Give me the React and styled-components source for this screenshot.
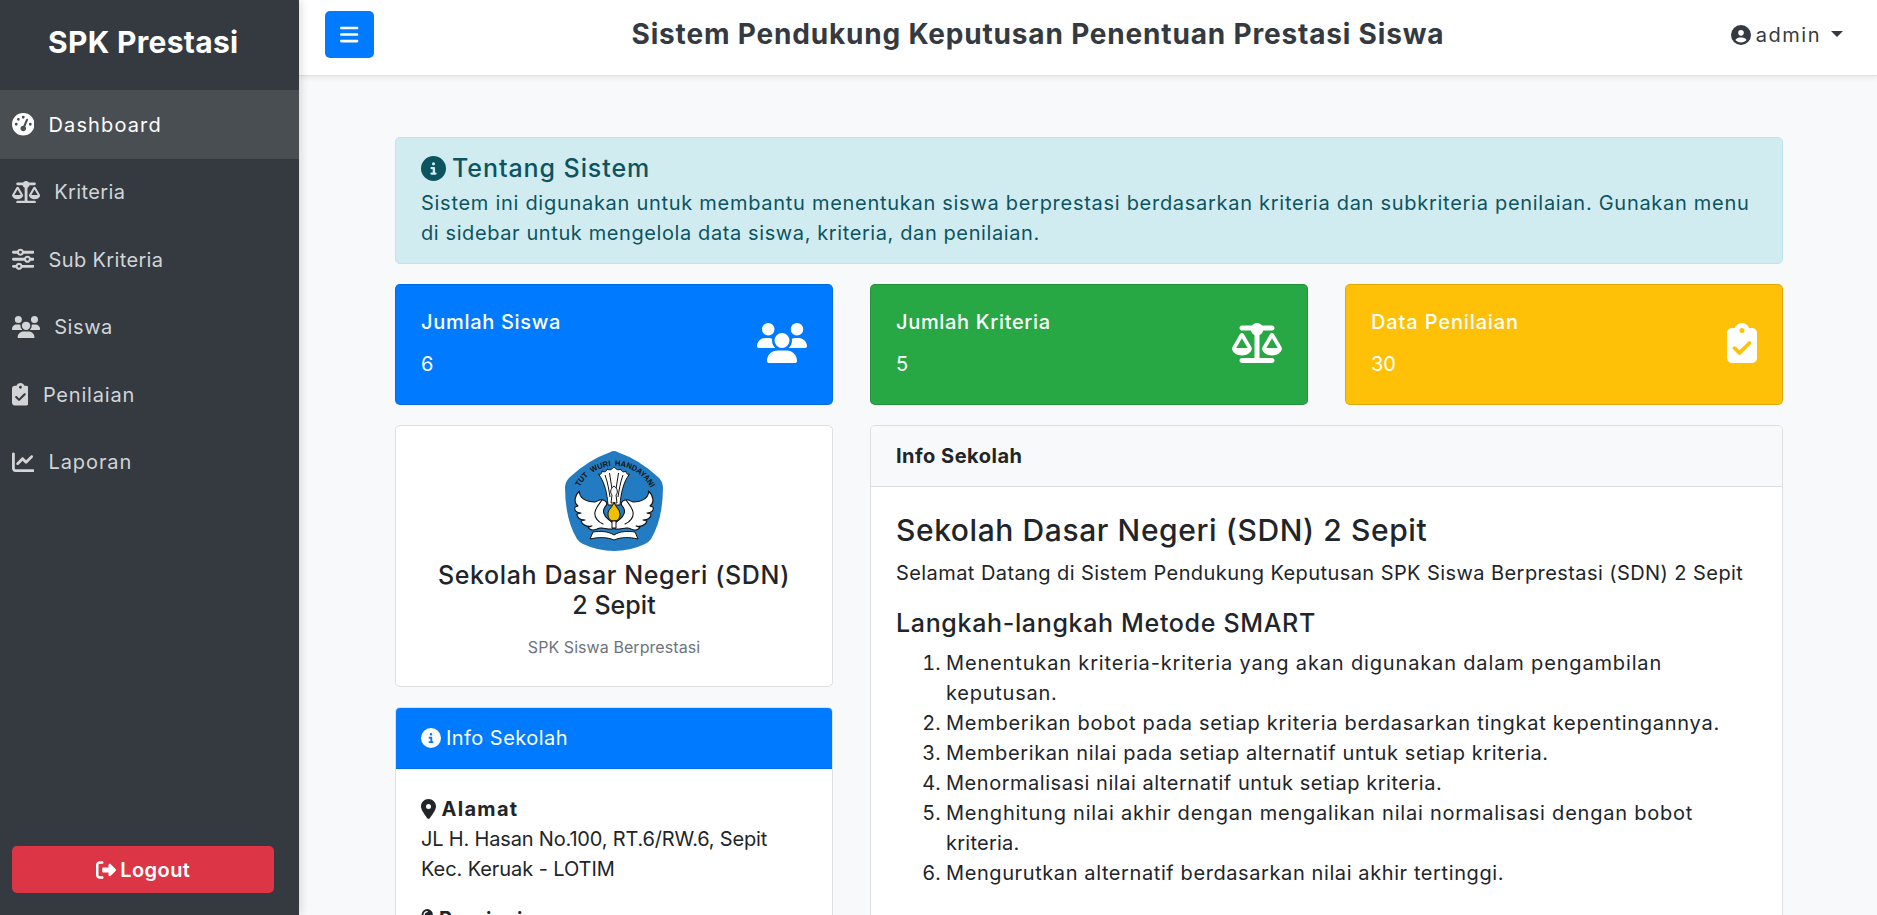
import React from 'react';
import styled, { createGlobalStyle, css } from 'styled-components';
import {
  FaBars,
  FaChartLine,
  FaCircleInfo,
  FaCircleUser,
  FaClipboardCheck,
  FaGaugeHigh,
  FaLocationDot,
  FaMapPin,
  FaRightFromBracket,
  FaScaleBalanced,
  FaSliders,
  FaUsers,
} from 'react-icons/fa6';

const GlobalStyle = createGlobalStyle`
  *, *::before, *::after { box-sizing: border-box; }
  body {
    margin: 0;
    background: #f8f9fa;
    color: #212529;
    font-family: Inter, "Open Sans", "Liberation Sans", sans-serif;
    font-size: 20px;
    line-height: 30px;
    overflow: hidden;
  }
  h1, h2, h3, h4, p { margin: 0; }
`;

/* A run of text with its own tracking */
const Tracked = styled.span`
  letter-spacing: ${(p) => p.$ls}px;
  white-space: nowrap;
`;

/* $ratio is the width of the glyph's view box over its height */
const Glyph = styled.span`
  display: inline-flex;
  flex: none;
  font-size: ${(p) => p.$size || 20}px;
  svg {
    display: block;
    height: 1em;
    width: ${(p) => p.$ratio || 1}em;
  }
`;

const Shell = styled.div`
  display: flex;
  height: 100vh;
  overflow: hidden;
`;

/* Sidebar */
const Sidebar = styled.aside`
  position: relative;
  z-index: 2;
  display: flex;
  flex-direction: column;
  flex: none;
  width: 299px;
  background: #343a40;
  box-shadow: 2px 0 8px rgba(0, 0, 0, 0.14);
`;

const Brand = styled.h1`
  height: 90px;
  padding: 24px 0 0 48px;
  color: #fff;
  font-size: 30px;
  font-weight: 700;
  line-height: 36px;
`;

const Nav = styled.nav`
  display: flex;
  flex-direction: column;
  flex: 1;
`;

const NavItem = styled.a`
  display: flex;
  align-items: center;
  flex: none;
  gap: 14.5px;
  height: 67.5px;
  padding-left: 11.5px;
  color: #d2d4d6;
  font-weight: 400;
  ${(p) =>
    p.$active &&
    css`
      height: 69px;
      margin-bottom: -0.75px;
      background: #494e52;
      color: #fff;
    `}
`;

const LogoutButton = styled.button`
  display: flex;
  align-items: center;
  justify-content: center;
  gap: 4.5px;
  width: 262px;
  height: 47px;
  margin: 0 0 22px 12px;
  border: 0;
  border-radius: 5px;
  background: #dc3545;
  color: #fff;
  font: 600 20px/30px Inter, "Open Sans", sans-serif;
`;

/* Top bar */
const Main = styled.div`
  display: flex;
  flex-direction: column;
  flex: 1;
  min-width: 0;
`;

const TopBar = styled.header`
  position: relative;
  z-index: 1;
  display: flex;
  align-items: flex-start;
  justify-content: space-between;
  flex: none;
  height: 76px;
  padding: 11px 34px 0 26px;
  border-bottom: 1px solid #dee2e6;
  background: #fff;
  box-shadow: 0 2px 5px rgba(0, 0, 0, 0.07);
  color: #343a40;
`;

const MenuButton = styled.button`
  display: flex;
  align-items: center;
  justify-content: center;
  width: 49px;
  height: 47px;
  padding: 0;
  border: 0;
  border-radius: 5px;
  background: #007bff;
  color: #fff;
`;

const PageTitle = styled.h2`
  padding: 6px 29px 0 0;
  font-size: 28px;
  font-weight: 700;
  line-height: 34px;
`;

const UserMenu = styled.div`
  display: flex;
  align-items: center;
  gap: 5px;
  height: 47px;
`;

const Caret = styled.i`
  margin: -1px 0 0 5px;
  border: 6px solid transparent;
  border-top-color: #343a40;
  border-bottom: 0;
`;

/* Content */
const Content = styled.main`
  display: flex;
  flex-direction: column;
  gap: 20px;
  width: 1388px;
  margin: 61px 0 0 96px;
`;

const Alert = styled.section`
  height: 127px;
  padding: 15px 25px;
  border: 1px solid #bee5eb;
  border-radius: 5px;
  background: #d1ecf1;
  color: #0c5460;
`;

const AlertTitle = styled.h4`
  display: flex;
  align-items: center;
  gap: 6px;
  margin-bottom: 5px;
  font-size: 25px;
  font-weight: 500;
  line-height: 30px;
`;

const Line = styled.div`
  letter-spacing: ${(p) => p.$ls}px;
  white-space: nowrap;
`;

const StatRow = styled.div`
  display: grid;
  grid-template-columns: repeat(3, 438px);
  justify-content: space-between;
`;

const StatCard = styled.article`
  display: flex;
  align-items: center;
  justify-content: space-between;
  height: 121px;
  padding: 0 25px;
  border: 1px solid rgba(0, 0, 0, 0.125);
  border-radius: 5px;
  background: ${(p) => p.$color};
  color: #fff;
`;

const StatLabel = styled.h4`
  margin-bottom: 15px;
  font-size: 20px;
  font-weight: 500;
  line-height: 24px;
`;

const StatIcon = styled(Glyph)`
  margin-bottom: 3px;
`;

const Columns = styled.div`
  display: grid;
  grid-template-columns: 438px 913px;
  justify-content: space-between;
  align-items: start;
`;

const Stack = styled.div`
  display: flex;
  flex-direction: column;
  gap: 20px;
`;

const Card = styled.section`
  border: 1px solid #dedfe0;
  border-radius: 5px;
  background: #fff;
  overflow: hidden;
`;

const CardHeader = styled.header`
  display: flex;
  align-items: center;
  gap: 5px;
  height: 61px;
  padding: 0 25px;
  border-bottom: 1px solid ${(p) => (p.$primary ? '#006fe6' : '#dadcdd')};
  background: ${(p) => (p.$primary ? '#007bff' : '#f8f9fa')};
  color: ${(p) => (p.$primary ? '#fff' : '#212529')};
  font-weight: ${(p) => (p.$primary ? 400 : 700)};
`;

const CardBody = styled.div`
  padding: 25px;
`;

const Profile = styled(CardBody)`
  display: flex;
  flex-direction: column;
  align-items: center;
  height: 260px;
  text-align: center;
`;

const ProfileName = styled.h3`
  margin: 9px 0 15px;
  font-size: 25px;
  font-weight: 500;
  line-height: 30px;
`;

const Muted = styled.p`
  color: #6c757d;
  font-size: 16px;
  line-height: 24px;
`;

const Field = styled.div`
  margin-bottom: 20px;
`;

const FieldLabel = styled.div`
  display: flex;
  align-items: center;
  gap: 5.5px;
  font-weight: 700;
`;

const Headline = styled.h2`
  margin-bottom: 10px;
  font-size: 30px;
  font-weight: 500;
  line-height: 36px;
`;

const SubHeadline = styled.h3`
  margin: 20px 0 10px;
  font-size: 25px;
  font-weight: 500;
  line-height: 30px;
`;

const Steps = styled.ol`
  margin: 0 0 60px;
  padding-left: 50px;
`;

const MENU = [
  { label: 'Dashboard', icon: FaGaugeHigh, ratio: 1, ls: 1.13, active: true },
  { label: 'Kriteria', icon: FaScaleBalanced, ratio: 1.25, ls: 0.4 },
  { label: 'Sub Kriteria', icon: FaSliders, ratio: 1, ls: 0.36 },
  { label: 'Siswa', icon: FaUsers, ratio: 1.25, ls: 0.6 },
  { label: 'Penilaian', icon: FaClipboardCheck, ratio: 0.75, ls: 0.8 },
  { label: 'Laporan', icon: FaChartLine, ratio: 1, ls: 0.9 },
];

const STATS = [
  { label: 'Jumlah Siswa', value: '6', color: '#007bff', icon: FaUsers, ratio: 1.25, ls: 0.7 },
  { label: 'Jumlah Kriteria', value: '5', color: '#28a745', icon: FaScaleBalanced, ratio: 1.25, ls: 0.68 },
  { label: 'Data Penilaian', value: '30', color: '#ffc107', icon: FaClipboardCheck, ratio: 0.75, ls: 0.87 },
];

const STEPS = [
  [
    ['Menentukan kriteria-kriteria yang akan digunakan dalam pengambilan', 0.845],
    ['keputusan.', 0.75],
  ],
  [['Memberikan bobot pada setiap kriteria berdasarkan tingkat kepentingannya.', 0.73]],
  [['Memberikan nilai pada setiap alternatif untuk setiap kriteria.', 0.615]],
  [['Menormalisasi nilai alternatif untuk setiap kriteria.', 0.53]],
  [
    ['Menghitung nilai akhir dengan mengalikan nilai normalisasi dengan bobot', 0.775],
    ['kriteria.', 0.25],
  ],
  [['Mengurutkan alternatif berdasarkan nilai akhir tertinggi.', 0.595]],
];

const Wing = () => (
  <g fill="#fff" stroke="#111" strokeWidth="1.1" strokeLinejoin="round" strokeLinecap="round">
    <path d="M15.500 40 C15 47 22 51 31 51 C35 50 35 48 39 49 C43 50 44 53 41 56 C38 60 40 65 44 68 L49 72 L49 78 C42 79 38 75 33 78 C29 80 25 79 24 76 C26 76 27 75 28 75 C23 76 18 74 17 70 L21 69 C16 69 13 67 13 63 L17 62 C12 62 10 59 11 56 L14 55 C9 52 11 44 15.500 40 Z" />
    <path d="M38 49 C36 52 32 56 31 61 C30 66 34 71 39 73" fill="none" />
  </g>
);

function SchoolEmblem() {
  return (
    <svg width="100" height="100" viewBox="0 0 100 100">
      <path
        d="M46 1.2 Q50 -1 54 1.2 Q76 9 94 26 Q98.500 30 99 36 Q99 68 87 88 Q85 91 81 93 Q66 100 50 100 Q34 100 19 93 Q15 91 13 88 Q1 68 1 36 Q1.500 30 6 26 Q24 9 46 1.200 Z"
        fill="#237cc1"
      />
      <path id="mottoArc" d="M15.500 36 A40 40 0 0 1 86 36" fill="none" />
      <text
        fill="#111"
        fontFamily="Liberation Sans, Arial, sans-serif"
        fontSize="8"
        fontWeight="700"
        xmlSpace="preserve"
      >
        <textPath href="#mottoArc" textLength="87" lengthAdjust="spacingAndGlyphs">
          {'TUT\u00a0 WURI\u00a0 HANDAYANI'}
        </textPath>
      </text>
      <g fill="#fff" stroke="#111" strokeWidth="1" strokeLinejoin="round">
        <path d="M44 54 C43 42 41 32 34.500 23 C37 24 38 22 38 20 C41 22 43 20 43 18 C46 20 48 18 50 16 C52 18 54 20 57 18 C57 20 59 22 62 20 C62 22 63 24 65.500 23 C59 32 57 42 56 54 Z" />
        <path d="M41 24 C44 32 45 40 46 46 M45.500 22 L48 38 M54.500 22 L52 38 M59 24 C56 32 55 40 54 46" fill="none" />
      </g>
      <Wing />
      <g transform="translate(100 0) scale(-1 1)">
        <Wing />
      </g>
      <g stroke="#111" strokeWidth="1" strokeLinejoin="round">
        <path d="M50 35 C46 38 46 42 48 44 L47 52 L53 52 L52 44 C54 42 54 38 50 35 Z" fill="#fff" />
        <path d="M50 51 C49 56 44 58 44 63 C44 68 47 70 50 70 C53 70 56 68 56 63 C56 58 51 56 50 51 Z" fill="#f0c000" />
        <path d="M48 70 L52 70 L52 77 L48 77 Z" fill="#fff" />
        <path d="M29 81 C36 80 44 80 50 84 C56 80 64 80 71 81 L74 88 C65 86 57 86 50 89 C43 86 35 86 26 88 Z" fill="#fff" />
      </g>
    </svg>
  );
}

export default function App() {
  return (
    <>
      <GlobalStyle />
      <Shell>
        <Sidebar>
          <Brand>
            <Tracked $ls={0.3}>SPK Prestasi</Tracked>
          </Brand>
          <Nav>
            {MENU.map(({ label, icon: Icon, ratio, ls, active }) => (
              <NavItem key={label} $active={active}>
                <Glyph $size={22.5} $ratio={ratio}>
                  <Icon />
                </Glyph>
                <Tracked $ls={ls}>{label}</Tracked>
              </NavItem>
            ))}
          </Nav>
          <LogoutButton>
            <Glyph>
              <FaRightFromBracket />
            </Glyph>
            <Tracked $ls={0.45}>Logout</Tracked>
          </LogoutButton>
        </Sidebar>

        <Main>
          <TopBar>
            <MenuButton>
              <Glyph $size={21} $ratio={0.875}>
                <FaBars />
              </Glyph>
            </MenuButton>
            <PageTitle>
              <Tracked $ls={0.82}>Sistem Pendukung Keputusan Penentuan Prestasi Siswa</Tracked>
            </PageTitle>
            <UserMenu>
              <Glyph>
                <FaCircleUser />
              </Glyph>
              <Tracked $ls={1.5}>admin</Tracked>
              <Caret />
            </UserMenu>
          </TopBar>

          <Content>
            <Alert>
              <AlertTitle>
                <Glyph $size={25}>
                  <FaCircleInfo />
                </Glyph>
                <Tracked $ls={0.93}>Tentang Sistem</Tracked>
              </AlertTitle>
              <Line $ls={0.715}>
                Sistem ini digunakan untuk membantu menentukan siswa berprestasi berdasarkan kriteria dan
                subkriteria penilaian. Gunakan menu
              </Line>
              <Line $ls={0.6}>di sidebar untuk mengelola data siswa, kriteria, dan penilaian.</Line>
            </Alert>

            <StatRow>
              {STATS.map(({ label, value, color, icon: Icon, ratio, ls }) => (
                <StatCard key={label} $color={color}>
                  <div>
                    <StatLabel>
                      <Tracked $ls={ls}>{label}</Tracked>
                    </StatLabel>
                    <p>{value}</p>
                  </div>
                  <StatIcon $size={40} $ratio={ratio}>
                    <Icon />
                  </StatIcon>
                </StatCard>
              ))}
            </StatRow>

            <Columns>
              <Stack>
                <Card>
                  <Profile>
                    <SchoolEmblem />
                    <ProfileName>
                      <Line $ls={0.607}>Sekolah Dasar Negeri (SDN)</Line>
                      <Line $ls={0.06}>2 Sepit</Line>
                    </ProfileName>
                    <Muted>
                      <Tracked $ls={0.07}>SPK Siswa Berprestasi</Tracked>
                    </Muted>
                  </Profile>
                </Card>
                <Card>
                  <CardHeader $primary>
                    <Glyph>
                      <FaCircleInfo />
                    </Glyph>
                    <Tracked $ls={0.45}>Info Sekolah</Tracked>
                  </CardHeader>
                  <CardBody>
                    <Field>
                      <FieldLabel>
                        <Glyph $ratio={0.75}>
                          <FaLocationDot />
                        </Glyph>
                        <Tracked $ls={1.3}>Alamat</Tracked>
                      </FieldLabel>
                      <Line $ls={-0.175}>JL H. Hasan No.100, RT.6/RW.6, Sepit</Line>
                      <Line $ls={-0.08}>Kec. Keruak - LOTIM</Line>
                    </Field>
                    <Field>
                      <FieldLabel>
                        <Glyph $ratio={0.625}>
                          <FaMapPin />
                        </Glyph>
                        <Tracked $ls={0.63}>Provinsi</Tracked>
                      </FieldLabel>
                    </Field>
                  </CardBody>
                </Card>
              </Stack>

              <Card>
                <CardHeader>
                  <Tracked $ls={0.5}>Info Sekolah</Tracked>
                </CardHeader>
                <CardBody>
                  <Headline>
                    <Tracked $ls={0.59}>Sekolah Dasar Negeri (SDN) 2 Sepit</Tracked>
                  </Headline>
                  <Line $ls={0.425}>
                    Selamat Datang di Sistem Pendukung Keputusan SPK Siswa Berprestasi (SDN) 2 Sepit
                  </Line>
                  <SubHeadline>
                    <Tracked $ls={0.66}>Langkah-langkah Metode SMART</Tracked>
                  </SubHeadline>
                  <Steps>
                    {STEPS.map((lines) => (
                      <li key={lines[0][0]}>
                        {lines.map(([text, ls]) => (
                          <Line key={text} $ls={ls}>
                            {text}
                          </Line>
                        ))}
                      </li>
                    ))}
                  </Steps>
                </CardBody>
              </Card>
            </Columns>
          </Content>
        </Main>
      </Shell>
    </>
  );
}
